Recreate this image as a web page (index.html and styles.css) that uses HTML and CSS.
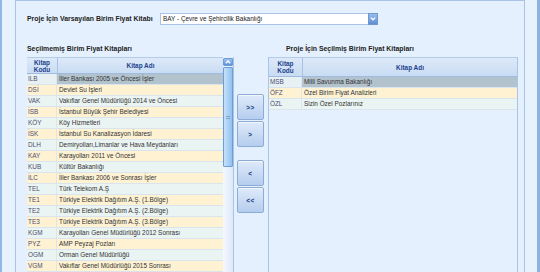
FILE: index.html
```html
<!DOCTYPE html>
<html lang="tr">
<head>
<meta charset="utf-8">
<link rel="stylesheet" href="styles.css">
</head>
<body>
<div class="win">
  <div class="edge-l"></div>
  <div class="panel">
    <div class="toprow">
      <span class="lbl lbl-def">Proje İçin Varsayılan Birim Fiyat Kitabı</span>
      <div class="combo">
        <span class="combo-text">BAY - Çevre ve Şehircilik Bakanlığı</span>
        <span class="combo-btn"><svg width="6" height="4" viewBox="0 0 6 4"><path d="M0.8 0.6 L3 2.8 L5.2 0.6" fill="none" stroke="#fff" stroke-width="1.3"/></svg></span>
      </div>
    </div>
    <div class="titles">
      <span class="lbl t-left">Seçilmemiş Birim Fiyat Kitapları</span>
      <span class="lbl t-right">Proje İçin Seçilmiş Birim Fiyat Kitapları</span>
    </div>
    <div class="lists">
      <div class="grid grid-left">
        <div class="gtable">
          <div class="ghead">
            <div class="hc code">Kitap<br>Kodu</div>
            <div class="hc name">Kitap Adı</div>
          </div>
          <div class="row sel"><div class="c code">İLB</div><div class="c name">İller Bankası 2005 ve Öncesi İşler</div></div>
          <div class="row cream"><div class="c code">DSİ</div><div class="c name">Devlet Su İşleri</div></div>
          <div class="row mint"><div class="c code">VAK</div><div class="c name">Vakıflar Genel Müdürlüğü 2014 ve Öncesi</div></div>
          <div class="row cream"><div class="c code">İSB</div><div class="c name">İstanbul Büyük Şehir Belediyesi</div></div>
          <div class="row mint"><div class="c code">KÖY</div><div class="c name">Köy Hizmetleri</div></div>
          <div class="row cream"><div class="c code">İSK</div><div class="c name">İstanbul Su Kanalizasyon İdaresi</div></div>
          <div class="row mint"><div class="c code">DLH</div><div class="c name">Demiryolları,Limanlar ve Hava Meydanları</div></div>
          <div class="row cream"><div class="c code">KAY</div><div class="c name">Karayolları 2011 ve Öncesi</div></div>
          <div class="row mint"><div class="c code">KUB</div><div class="c name">Kültür Bakanlığı</div></div>
          <div class="row cream"><div class="c code">İLC</div><div class="c name">İller Bankası 2006 ve Sonrası İşler</div></div>
          <div class="row mint"><div class="c code">TEL</div><div class="c name">Türk Telekom A.Ş</div></div>
          <div class="row cream"><div class="c code">TE1</div><div class="c name">Türkiye Elektrik Dağıtım A.Ş. (1.Bölge)</div></div>
          <div class="row mint"><div class="c code">TE2</div><div class="c name">Türkiye Elektrik Dağıtım A.Ş. (2.Bölge)</div></div>
          <div class="row cream"><div class="c code">TE3</div><div class="c name">Türkiye Elektrik Dağıtım A.Ş. (3.Bölge)</div></div>
          <div class="row mint"><div class="c code">KGM</div><div class="c name">Karayolları Genel Müdürlüğü 2012 Sonrası</div></div>
          <div class="row cream"><div class="c code">PYZ</div><div class="c name">AMP Peyzaj Pozları</div></div>
          <div class="row mint"><div class="c code">OGM</div><div class="c name">Orman Genel Müdürlüğü</div></div>
          <div class="row cream"><div class="c code">VGM</div><div class="c name">Vakıflar Genel Müdürlüğü 2015 Sonrası</div></div>
        </div>
        <div class="vscroll">
          <div class="sb-up"><svg width="6" height="4" viewBox="0 0 6 4"><path d="M0.8 3.2 L3 1 L5.2 3.2" fill="none" stroke="#fff" stroke-width="1.3"/></svg></div>
          <div class="sb-thumb"><span class="grip"></span></div>
        </div>
      </div>
      <div class="mid">
        <button class="mv">&gt;&gt;</button>
        <button class="mv">&gt;</button>
        <button class="mv gap">&lt;</button>
        <button class="mv">&lt;&lt;</button>
      </div>
      <div class="grid grid-right">
        <div class="gtable">
          <div class="ghead">
            <div class="hc code">Kitap<br>Kodu</div>
            <div class="hc name">Kitap Adı</div>
          </div>
          <div class="row sel"><div class="c code">MSB</div><div class="c name">Milli Savunma Bakanlığı</div></div>
          <div class="row cream"><div class="c code">ÖFZ</div><div class="c name">Özel Birim Fiyat Analizleri</div></div>
          <div class="row mint"><div class="c code">ÖZL</div><div class="c name">Sizin Özel Pozlarınız</div></div>
        </div>
      </div>
    </div>
  </div>
  <div class="edge-r"></div>
</div>
</body>
</html>
```

FILE: styles.css
```css
html, body {
  margin: 0;
  padding: 0;
}
body {
  width: 540px;
  height: 272px;
  overflow: hidden;
  font-family: "Liberation Sans", Arial, sans-serif;
  font-size: 6.4px;
  color: #333;
  background: #e4f0fd;
}
.win {
  display: flex;
  height: 272px;
}
.edge-l {
  width: 13px;
  flex: none;
  border-left: 2px solid #94b6e4;
  border-right: 1px solid #a9c4e8;
  background: #e8f2fd;
}
.edge-r {
  width: 12px;
  flex: none;
  border-right: 3px solid #8db1e2;
  background: #e8f2fd;
}
.panel {
  width: 497px;
  flex: none;
  border-top: 1px solid #a9c4e8;
  border-right: 1px solid #a9c4e8;
  padding: 11px 0 0 11px;
  background: #e4f0fd;
  display: flex;
  flex-direction: column;
  overflow: hidden;
}
.lbl {
  font-weight: bold;
  font-size: 6.9px;
  color: #222;
  white-space: nowrap;
}
.toprow {
  display: flex;
  align-items: center;
  height: 13px;
}
.lbl-def {
  width: 133px;
  flex: none;
}
.combo {
  display: flex;
  width: 218px;
  height: 12px;
}
.combo-text {
  flex: 1;
  background: #fff;
  border: 1px solid #aac3e6;
  border-right: none;
  padding-left: 2px;
  line-height: 10px;
  color: #222;
}
.combo-btn {
  width: 10px;
  height: 12px;
  box-sizing: border-box;
  border: 1px solid #7098cf;
  background: linear-gradient(#98bdf0, #5d8fd6);
  display: flex;
  align-items: center;
  justify-content: center;
}
.titles {
  display: flex;
  height: 9px;
  line-height: 9px;
  margin-top: 19px;
}
.t-left {
  width: 259px;
  flex: none;
}
.lists {
  display: flex;
  margin-top: 4px;
  flex: 1;
  overflow: hidden;
}
.grid {
  display: flex;
  flex: none;
}
.grid-left {
  width: 206px;
  border-right: 1px solid #a9c4e8;
}
.grid-right {
  width: 248px;
  border-left: 1px solid #a9c4e8;
  border-right: 1px solid #a9c4e8;
}
.gtable {
  flex: 1;
  display: flex;
  flex-direction: column;
}
.ghead {
  display: flex;
  height: 18px;
  border-top: 1px solid #b4cbe9;
  border-bottom: 1px solid #9fbbe0;
  background: linear-gradient(#dde9f8, #c9dcf3);
  color: #1c3f8c;
  font-weight: bold;
}
.hc {
  display: flex;
  align-items: center;
  justify-content: center;
  text-align: center;
  line-height: 7px;
}
.code {
  width: 30px;
  flex: none;
}
.grid-right .code {
  width: 33px;
}
.hc.code {
  border-right: 1px solid #a8c2e4;
}
.name {
  flex: 1;
  min-width: 0;
}
.row {
  display: flex;
  height: 10px;
  line-height: 10px;
  border-bottom: 1px solid #d9e4ec;
  white-space: nowrap;
}
.c {
  overflow: hidden;
}
.c.code {
  padding-left: 1px;
  box-sizing: border-box;
  color: #4d4d70;
  border-right: 1px solid #dde6ec;
}
.c.name {
  padding-left: 2px;
  color: #333;
}
.cream {
  background: #fef2d3;
}
.mint {
  background: #eaf4f2;
}
.sel .code {
  background: #e7f1f4;
}
.sel .name {
  background: #b3c3ce;
}
.vscroll {
  width: 10px;
  flex: none;
  display: flex;
  flex-direction: column;
  padding-top: 1px;
  background: linear-gradient(to right, #f4f8fe, #dce8f7);
}
.sb-up {
  height: 8px;
  box-sizing: border-box;
  border: 1px solid #6f9bd4;
  border-radius: 1px;
  background: linear-gradient(#9dc2f1, #5e92da);
  display: flex;
  align-items: center;
  justify-content: center;
}
.sb-thumb {
  height: 100px;
  margin-top: 1px;
  box-sizing: border-box;
  border: 1px solid #6d9dd6;
  border-radius: 1px;
  background: linear-gradient(to right, #c6e1fb, #92c1ef);
  display: flex;
  align-items: center;
  justify-content: center;
}
.grip {
  width: 4px;
  height: 3px;
  border-top: 1px solid #7ba4d4;
  border-bottom: 1px solid #7ba4d4;
  box-sizing: border-box;
}
.mid {
  width: 31px;
  flex: none;
  padding: 37px 0 0 3px;
  display: flex;
  flex-direction: column;
  gap: 1px;
}
.mv {
  width: 27px;
  height: 26px;
  padding: 0;
  border: 1px solid #8cacd6;
  border-radius: 2px;
  background: linear-gradient(#dfeafa, #b5cdee);
  box-shadow: inset 0 1px 0 #f2f7fe;
  color: #1e3f86;
  font-family: "Liberation Sans", Arial, sans-serif;
  font-weight: bold;
  font-size: 6.5px;
  letter-spacing: 0.5px;
}
.mv.gap {
  margin-top: 12px;
}
```
